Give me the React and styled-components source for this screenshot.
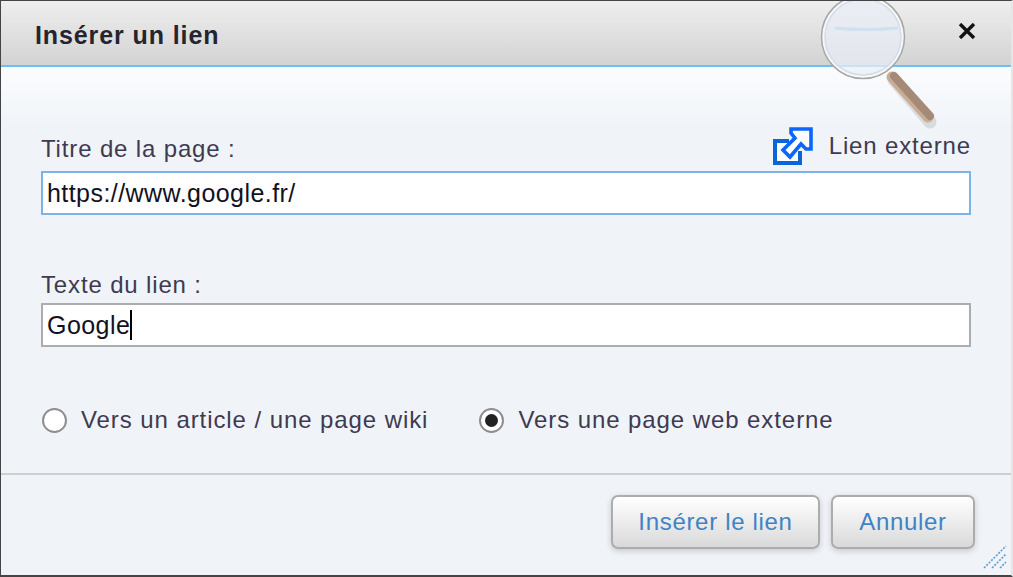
import React from "react";
import styled, { createGlobalStyle } from "styled-components";

const Global = createGlobalStyle`
  html, body { margin: 0; padding: 0; background: #333; }
  body { font-family: "Liberation Sans", Arial, sans-serif; }
`;

const Dialog = styled.div`
  position: relative;
  width: 1013px;
  height: 577px;
  box-sizing: border-box;
  border-top: 1px solid #444;
  border-left: 1px solid #444;
  border-bottom: 2px solid #444;
  border-right: 2px solid #e6e6e6;
  display: flex;
  flex-direction: column;
  overflow: hidden;
  background: linear-gradient(#fbfcfe 67px, #f0f4f8 125px);
`;

const Header = styled.div`
  height: 64px;
  flex: none;
  display: flex;
  align-items: center;
  justify-content: space-between;
  padding: 0 35px 0 34px;
  background: linear-gradient(#eeeeee, #d3d3d3);
  border-bottom: 2px solid #68c0f5;
`;

const Title = styled.h1`
  margin: 4px 0 0;
  font-size: 25px;
  font-weight: 700;
  letter-spacing: 0.9px;
  color: #25252f;
`;

const Close = styled.button`
  display: flex;
  padding: 0;
  margin-bottom: 4px;
  border: 0;
  background: none;
`;

const Form = styled.div`
  flex: 1;
  display: flex;
  flex-direction: column;
  padding: 63px 40px 0 40px;
`;

const FieldHead = styled.div`
  display: flex;
  align-items: flex-end;
  justify-content: space-between;
  height: 37px;
`;

const Label = styled.label`
  display: block;
  font-size: 24px;
  letter-spacing: 0.85px;
  line-height: 30px;
  margin-bottom: ${(p) => (p.$raised ? "3px" : "-1px")};
  color: #403a50;
`;

const External = styled.div`
  display: flex;
  align-items: center;
  gap: 16px;
  font-size: 24px;
  letter-spacing: 0.85px;
  line-height: 30px;
  color: #403a50;
  margin-bottom: 2px;
`;

const Input = styled.div`
  box-sizing: border-box;
  height: 44px;
  margin-top: 4px;
  padding: 0 4px;
  display: flex;
  align-items: center;
  background: #fff;
  border: 2px solid ${(p) => (p.$focused ? "#7fb2e8" : "#adadb0")};
  font-size: 25px;
  letter-spacing: 0.44px;
  color: #111122;
`;

const Caret = styled.span`
  width: 2px;
  height: 30px;
  background: #000;
`;

const SecondField = styled.div`
  margin-top: 55px;
`;

const Radios = styled.div`
  display: flex;
  align-items: center;
  gap: 51px;
  margin: 58px 0 0 1px;
`;

const RadioRow = styled.div`
  display: flex;
  align-items: center;
  gap: 14px;
  font-size: 24px;
  letter-spacing: 0.92px;
  line-height: 30px;
  color: #403a50;
`;

const Radio = styled.span`
  box-sizing: border-box;
  width: 25px;
  height: 25px;
  border-radius: 50%;
  border: 2px solid #8e8e8e;
  background: #fff;
  display: flex;
  align-items: center;
  justify-content: center;
  &::after {
    content: "";
    display: ${(p) => (p.$checked ? "block" : "none")};
    width: 13px;
    height: 13px;
    border-radius: 50%;
    background: #222;
  }
`;

const Footer = styled.div`
  flex: none;
  height: 102px;
  box-sizing: border-box;
  border-top: 2px solid #cfcfcf;
  display: flex;
  justify-content: flex-end;
  gap: 11px;
  padding: 20px 36px 0 0;
  position: relative;
`;

const Button = styled.button`
  box-sizing: border-box;
  height: 54px;
  width: ${(p) => p.$w}px;
  padding: 0;
  border: 2px solid #acacac;
  border-radius: 7px;
  background: linear-gradient(#ffffff, #d9d9d9);
  box-shadow: 0 2px 6px rgba(0, 0, 0, 0.18);
  font-family: inherit;
  font-size: 24px;
  letter-spacing: 0.68px;
  color: #3f83c4;
`;

const Grip = styled.svg`
  position: absolute;
  right: 4px;
  bottom: 6px;
`;

const Magnifier = styled.svg`
  position: absolute;
  top: -1px;
  left: 813px;
`;

function MagnifierIcon() {
  return (
    <Magnifier width="130" height="132" viewBox="0 0 130 132">
      <line x1="80" y1="80" x2="116" y2="122" stroke="#000" strokeOpacity="0.1" strokeWidth="13" strokeLinecap="round" />
      <line x1="78" y1="77" x2="114" y2="117" stroke="#c9ae97" strokeWidth="11" strokeLinecap="round" />
      <line x1="80" y1="76" x2="116" y2="116" stroke="#a68a78" strokeWidth="8" strokeLinecap="round" />
      <circle cx="49" cy="37" r="40" fill="#e9eff6" fillOpacity="0.72" stroke="#f7f8fa" strokeOpacity="0.9" strokeWidth="3" />
      <circle cx="49" cy="37" r="41.5" fill="none" stroke="#a6a6a6" strokeWidth="1.5" />
      <circle cx="49" cy="37" r="38" fill="none" stroke="#d3dee9" strokeWidth="1.5" />
      <path d="M21 28 Q49 31 84 28" fill="none" stroke="#cfe0ee" strokeWidth="3" />
    </Magnifier>
  );
}

function ExternalIcon() {
  return (
    <svg width="40" height="38" viewBox="0 0 40 38">
      <path d="M27 24V36H2V14H16" fill="#fff" stroke="#0a66d8" strokeWidth="4" />
      <path d="M18 2H38V22H33L28 17L17 30L10 23L22 11L18 6Z" fill="#fff" stroke="#0a66ff" strokeWidth="3.6" />
    </svg>
  );
}

export default function App() {
  return (
    <>
      <Global />
      <Dialog>
        <Header>
          <Title>Insérer un lien</Title>
          <Close>
            <svg width="18" height="16" viewBox="0 0 18 16">
              <path d="M2 1l14 14M16 1L2 15" stroke="#111" strokeWidth="3.4" />
            </svg>
          </Close>
        </Header>
        <Form>
          <FieldHead>
            <Label $raised>Titre de la page :</Label>
            <External>
              <ExternalIcon />
              Lien externe
            </External>
          </FieldHead>
          <Input $focused>https://www.google.fr/</Input>
          <SecondField>
            <Label>Texte du lien :</Label>
            <Input>
              Google
              <Caret />
            </Input>
          </SecondField>
          <Radios>
            <RadioRow>
              <Radio />
              Vers un article / une page wiki
            </RadioRow>
            <RadioRow>
              <Radio $checked />
              Vers une page web externe
            </RadioRow>
          </Radios>
        </Form>
        <Footer>
          <Button $w={209}>Insérer le lien</Button>
          <Button $w={144}>Annuler</Button>
          <Grip width="24" height="24" viewBox="0 0 24 24">
            <path d="M1 23L23 1M9 23L23 9M17 23l6-6" stroke="#5f9bd2" strokeWidth="1.6" strokeDasharray="2 1.4" />
          </Grip>
        </Footer>
        <MagnifierIcon />
      </Dialog>
    </>
  );
}
